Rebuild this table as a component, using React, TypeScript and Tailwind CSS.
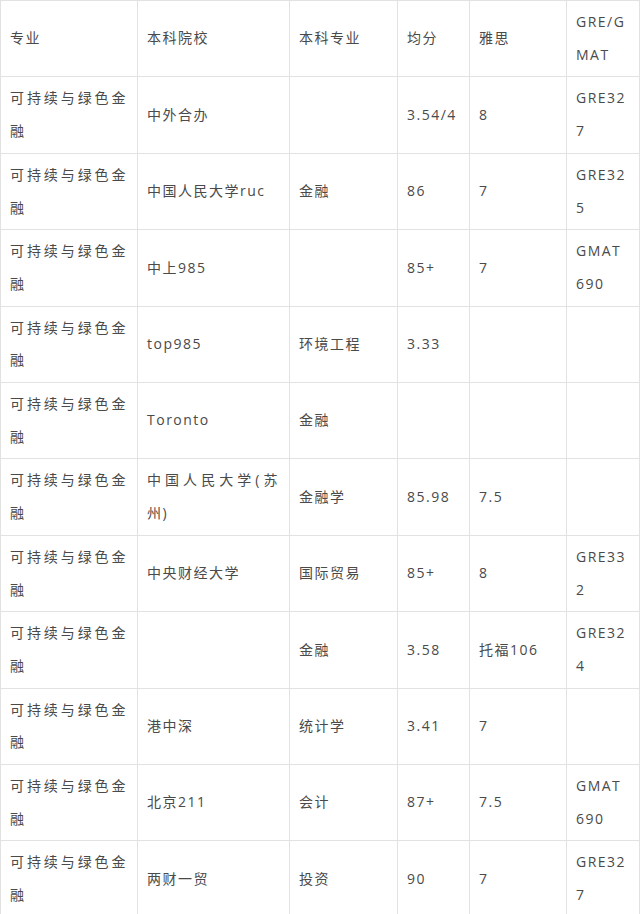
import React from "react";

type Row = [string, React.ReactNode, string, string, string, React.ReactNode];

const M = "可持续与绿色金融";

const rows: Row[] = [
  [M, "中外合办", "", "3.54/4", "8", <>GRE32<br />7</>],
  [M, "中国人民大学ruc", "金融", "86", "7", <>GRE32<br />5</>],
  [M, "中上985", "", "85+", "7", <>GMAT<br />690</>],
  [M, "top985", "环境工程", "3.33", "", ""],
  [M, "Toronto", "金融", "", "", ""],
  [M, "中国人民大学(苏州)", "金融学", "85.98", "7.5", ""],
  [M, "中央财经大学", "国际贸易", "85+", "8", <>GRE33<br />2</>],
  [M, "", "金融", "3.58", "托福106", <>GRE32<br />4</>],
  [M, "港中深", "统计学", "3.41", "7", ""],
  [M, "北京211", "会计", "87+", "7.5", <>GMAT<br />690</>],
  [M, "两财一贸", "投资", "90", "7", <>GRE32<br />7</>],
];

const cell =
  "border border-[#e2e2e2] pl-[9px] pr-[10px] py-[5px] align-middle text-justify break-all";

export default function App() {
  return (
    <div
      className="w-[640px] bg-white text-[14px] leading-[32.7px] tracking-[1.5px] text-[#4a4a4a]"
      style={{ fontFamily: '"Open Sans", "Noto Sans CJK SC", sans-serif' }}
    >
      <table className="w-[639px] table-fixed border-collapse">
        <colgroup>
          <col className="w-[137px]" />
          <col className="w-[152px]" />
          <col className="w-[108px]" />
          <col className="w-[72px]" />
          <col className="w-[97px]" />
          <col className="w-[73px]" />
        </colgroup>
        <tbody>
          <tr>
            <td className={cell}>专业</td>
            <td className={cell}>本科院校</td>
            <td className={cell}>本科专业</td>
            <td className={cell}>均分</td>
            <td className={cell}>雅思</td>
            <td className={cell}>
              GRE/G
              <br />
              MAT
            </td>
          </tr>
          {rows.map((r, i) => (
            <tr key={i}>
              {r.map((c, j) => (
                <td key={j} className={cell}>
                  {c}
                </td>
              ))}
            </tr>
          ))}
        </tbody>
      </table>
    </div>
  );
}
